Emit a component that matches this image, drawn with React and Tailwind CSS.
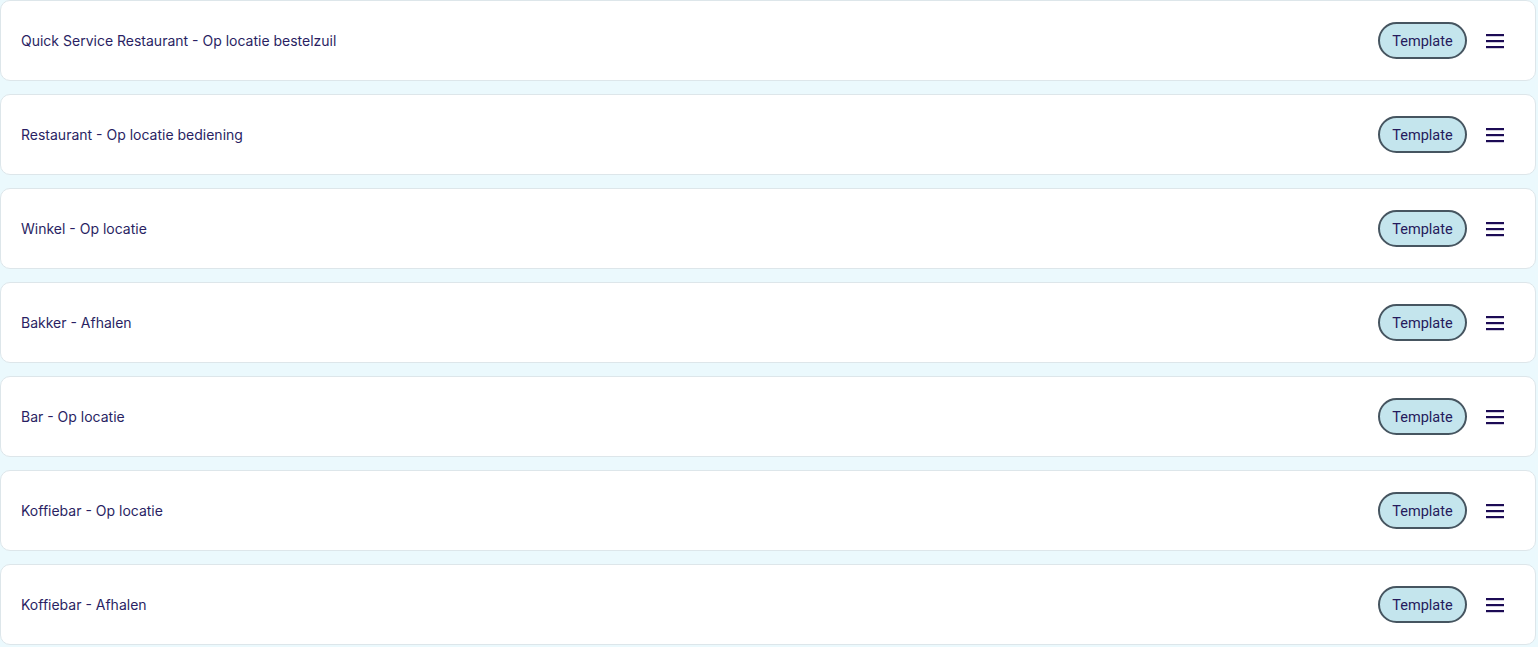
import React from "react";

const items = [
  "Quick Service Restaurant - Op locatie bestelzuil",
  "Restaurant - Op locatie bediening",
  "Winkel - Op locatie",
  "Bakker - Afhalen",
  "Bar - Op locatie",
  "Koffiebar - Op locatie",
  "Koffiebar - Afhalen",
];

function Menu() {
  return (
    <svg width="24" height="24" viewBox="0 0 24 24" className="shrink-0">
      <rect x="3" y="5" width="18" height="2.2" fill="#1c0b55" />
      <rect x="3" y="11" width="18" height="2.2" fill="#1c0b55" />
      <rect x="3" y="17" width="18" height="2.2" fill="#1c0b55" />
    </svg>
  );
}

export default function App() {
  return (
    <div className="min-h-[647px] w-full bg-[#ebf9fd] pr-[2px] flex flex-col gap-[13px]">
      {items.map((t) => (
        <div
          key={t}
          className="h-[81px] bg-white border border-[#dde6ea] rounded-[10px] flex items-center justify-between pl-[20px] pr-[28px]"
        >
          <span
            className="text-[14px] text-[#2a1f63]"
            style={{ fontFamily: "Inter, 'Noto Sans', sans-serif" }}
          >
            {t}
          </span>
          <div className="flex items-center gap-[16px]">
            <span
              className="h-[37px] w-[89px] pt-[2px] flex items-center justify-center rounded-full border-2 border-[#465560] bg-[#c4e5ed] text-[14.5px] text-[#251a5c]"
              style={{ fontFamily: "Roboto, 'Liberation Sans', sans-serif" }}
            >
              Template
            </span>
            <Menu />
          </div>
        </div>
      ))}
    </div>
  );
}
